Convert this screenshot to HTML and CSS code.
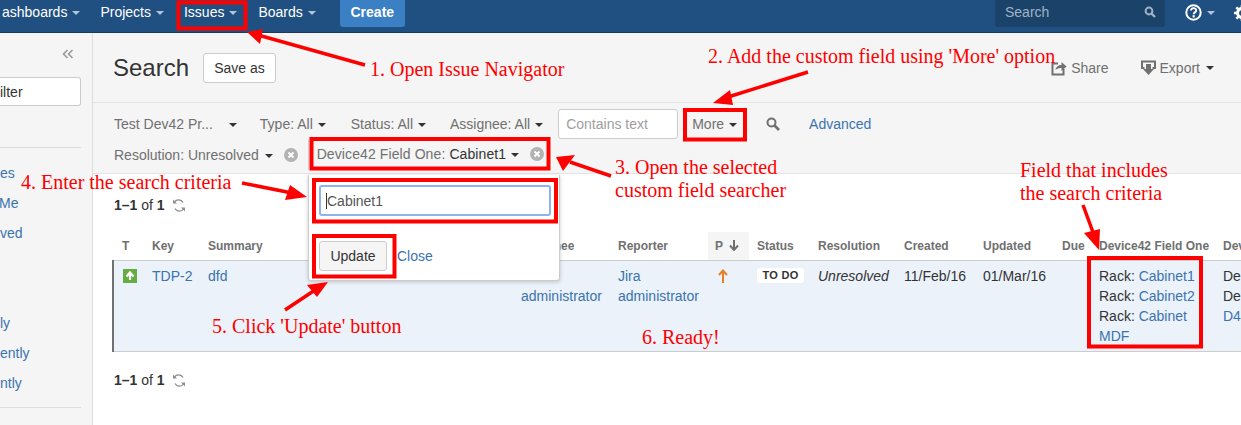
FILE: index.html
```html
<!DOCTYPE html>
<html lang="en">
<head>
    <meta charset="UTF-8">
    <title>Search</title>
    <link rel="stylesheet" href="styles.css">
</head>
<body>
    <header class="topbar">
        <nav class="nav">
            <a class="nav-item nav-first">ashboards<i class="caret caret-light"></i></a>
            <a class="nav-item">Projects<i class="caret caret-light"></i></a>
            <a class="nav-item nav-issues">Issues<i class="caret caret-light"></i></a>
            <a class="nav-item">Boards<i class="caret caret-light"></i></a>
            <a class="create">Create</a>
        </nav>
        <div class="top-right">
            <div class="quick-search">
                <span>Search</span>
                <svg width="12" height="12" viewBox="0 0 12 12"><circle cx="5" cy="5" r="3.4" fill="none" stroke="#9fb3c8" stroke-width="2"/><path d="M7.5 7.5L11 11" stroke="#9fb3c8" stroke-width="2.4"/></svg>
            </div>
            <div class="help">
                <svg width="17" height="17" viewBox="0 0 17 17"><circle cx="8.5" cy="8.5" r="7.2" fill="none" stroke="#fff" stroke-width="2"/><path d="M6 6.6c0-3.2 5.2-3.2 5.2-.2 0 1.900-2.500 2-2.500 3.900" fill="none" stroke="#fff" stroke-width="1.900"/><rect x="7.600" y="11.200" width="2.200" height="2.200" fill="#fff"/></svg>
                <i class="caret caret-light"></i>
            </div>
            <svg class="gear" width="16" height="16" viewBox="0 0 16 16"><circle cx="8" cy="8" r="4.500" fill="none" stroke="#fff" stroke-width="3"/><path d="M8 0v16M0 8h16M2.300 2.300l11.400 11.400M13.700 2.300L2.300 13.700" stroke="#fff" stroke-width="2.600" stroke-dasharray="3 10 3"/></svg>
        </div>
    </header>

    <div class="layout">
        <aside class="sidebar">
            <div class="side-top">
                <svg width="12" height="10" viewBox="0 0 12 10"><path d="M5.500 1L1.500 5l4 4M10.500 1l-4 4 4 4" fill="none" stroke="#999" stroke-width="1.600"/></svg>
            </div>
            <div class="side-filter">ilter</div>
            <ul class="side-list">
                <li>es</li>
                <li class="clip-m">Me</li>
                <li>ved</li>
                <li>&nbsp;</li>
                <li>&nbsp;</li>
                <li>ly</li>
                <li>ently</li>
                <li>ntly</li>
            </ul>
        </aside>

        <main class="content">
            <div class="page-head">
                <h1>Search</h1>
                <button class="save-as">Save as</button>
                <div class="head-actions">
                    <a class="head-link">
                        <svg width="16" height="16" viewBox="0 0 16 16"><path d="M7 3.500H1.500v11h11V9" fill="none" stroke="#707070" stroke-width="2"/><path d="M4.500 10c.5-3.500 3-5 6-5V2l5 4.500-5 4.500V8c-2.500 0-4.500.5-6 2z" fill="#707070"/></svg>
                        Share
                    </a>
                    <a class="head-link head-export">
                        <svg width="15" height="16" viewBox="0 0 15 16"><path d="M3.500 8H1V1.500h13V8h-2.500" fill="none" stroke="#707070" stroke-width="2"/><path d="M5 4h5v5h3l-5.500 6L2 9h3z" fill="#707070"/></svg>
                        Export<i class="caret"></i>
                    </a>
                </div>
            </div>

            <div class="filters">
                <div class="filter-row">
                    <span class="crit crit-project">Test Dev42 Pr...<i class="caret caret-far"></i></span>
                    <span class="crit crit-type">Type: All<i class="caret"></i></span>
                    <span class="crit">Status: All<i class="caret"></i></span>
                    <span class="crit crit-last">Assignee: All<i class="caret"></i></span>
                    <span class="text-query">Contains text</span>
                    <span class="crit crit-more">More<i class="caret"></i></span>
                    <svg class="search-go" width="14" height="14" viewBox="0 0 14 14"><circle cx="5.500" cy="5.500" r="4" fill="none" stroke="#707070" stroke-width="2"/><path d="M8.500 8.500L13 13" stroke="#707070" stroke-width="2.600"/></svg>
                    <a class="link">Advanced</a>
                </div>
                <div class="filter-row">
                    <span class="crit crit-res">Resolution: Unresolved<i class="caret"></i>
                        <svg class="clear" width="14" height="14" viewBox="0 0 14 14"><circle cx="7" cy="7" r="7" fill="#b3b3b3"/><path d="M4.500 4.500l5 5M9.500 4.500l-5 5" stroke="#fff" stroke-width="1.800"/></svg>
                    </span>
                    <span class="chip">Device42 Field One: <b>Cabinet1</b><i class="caret"></i>
                        <svg class="clear" width="14" height="14" viewBox="0 0 14 14"><circle cx="7" cy="7" r="7" fill="#b3b3b3"/><path d="M4.500 4.500l5 5M9.500 4.500l-5 5" stroke="#fff" stroke-width="1.800"/></svg>
                    </span>
                </div>
            </div>

            <div class="results">
                <div class="count">1–1 <span>of</span> 1
                    <svg width="14" height="13" viewBox="0 0 14 13"><path d="M11 3.500A5 5 0 0 0 2.500 3M3 9.500a5 5 0 0 0 8.500.5" fill="none" stroke="#8c8c8c" stroke-width="1.300"/><path d="M1 .5v4h4zM13 12.500v-4H9z" fill="#8c8c8c"/></svg>
                </div>
                <table class="issues">
                    <colgroup>
                        <col class="c31"><col class="c56"><col class="c313"><col class="c97"><col class="c98"><col class="c41"><col class="c61"><col class="c86"><col class="c79"><col class="c79"><col class="c37"><col class="c124"><col class="c30">
                    </colgroup>
                    <thead>
                        <tr>
                            <th class="first-head">T</th><th>Key</th><th>Summary</th><th>Assignee</th><th>Reporter</th>
                            <th class="sorted">P
                                <svg width="10" height="11" viewBox="0 0 10 11"><path d="M5 0v9M1 5.500L5 10l4-4.500" fill="none" stroke="#707070" stroke-width="2"/></svg>
                            </th>
                            <th>Status</th><th>Resolution</th><th>Created</th><th>Updated</th><th>Due</th><th>Device42 Field One</th><th>Dev</th>
                        </tr>
                    </thead>
                    <tbody>
                        <tr>
                            <td class="first"><svg class="type-icon" width="14" height="14" viewBox="0 0 14 14"><rect width="14" height="14" fill="#65ac43"/><path d="M7 11V5M3.500 7.500L7 3.500l3.500 4" fill="none" stroke="#fff" stroke-width="2.200"/></svg></td>
                            <td><a class="link">TDP-2</a></td>
                            <td><a class="link">dfd</a></td>
                            <td><a class="link">Jira</a> <a class="link">administrator</a></td>
                            <td><a class="link">Jira</a> <a class="link">administrator</a></td>
                            <td><svg class="prio" width="10" height="14" viewBox="0 0 10 14"><path d="M5 14V2M1 6l4-4.500L9 6" fill="none" stroke="#ea7d24" stroke-width="2"/></svg></td>
                            <td><span class="lozenge">TO DO</span></td>
                            <td><em>Unresolved</em></td>
                            <td>11/Feb/16</td>
                            <td>01/Mar/16</td>
                            <td></td>
                            <td>
                                <div>Rack: <a class="link">Cabinet1</a></div>
                                <div>Rack: <a class="link">Cabinet2</a></div>
                                <div>Rack: <a class="link">Cabinet</a></div>
                                <div><a class="link">MDF</a></div>
                            </td>
                            <td class="nowrap">
                                <div>De</div>
                                <div>De</div>
                                <div><a class="link">D4</a></div>
                            </td>
                        </tr>
                    </tbody>
                </table>
                <div class="count count-bottom">1–1 <span>of</span> 1
                    <svg width="14" height="13" viewBox="0 0 14 13"><path d="M11 3.500A5 5 0 0 0 2.500 3M3 9.500a5 5 0 0 0 8.500.5" fill="none" stroke="#8c8c8c" stroke-width="1.300"/><path d="M1 .5v4h4zM13 12.500v-4H9z" fill="#8c8c8c"/></svg>
                </div>
            </div>
        </main>
    </div>

    <!-- searcher dropdown, sits over the results -->
    <div class="popup">
        <div class="popup-input">Cabinet1</div>
        <div class="popup-actions">
            <button class="update">Update</button>
            <a class="link">Close</a>
        </div>
    </div>

    <!-- annotations drawn on the screenshot -->
    <svg class="marks" width="1241" height="425" viewBox="0 0 1241 425">
        <g fill="none" stroke="#f00" stroke-width="4">
            <rect x="178.500" y="2.500" width="67" height="26"/>
            <rect x="685" y="110" width="60" height="29.500"/>
            <rect x="311.500" y="139" width="237" height="29.500"/>
            <rect x="314" y="180" width="242" height="41.500"/>
            <rect x="314" y="236" width="80.500" height="40.500"/>
            <rect x="1089" y="258" width="112" height="88.500"/>
            <path d="M365 65L258 35M808 72L728 97M611 176L570 162M242 183L292 193M285 310L318 288M1083 205L1094 235" stroke-width="3.500"/>
        </g>
        <g fill="#f00">
            <polygon points="247,32 263,29 260,44"/>
            <polygon points="713,103 730,90 733,105"/>
            <polygon points="556,157 575,155 563,171"/>
            <polygon points="307,197 290,185 285,200"/>
            <polygon points="328,282 307,285 317,297"/>
            <polygon points="1099,250 1084,233 1100,229"/>
        </g>
    </svg>
    <div class="note note-1">1. Open Issue Navigator</div>
    <div class="note note-2">2. Add the custom field using 'More' option</div>
    <div class="note note-3">3. Open the selected<br>custom field searcher</div>
    <div class="note note-4">4. Enter the search criteria</div>
    <div class="note note-5">5. Click 'Update' button</div>
    <div class="note note-6">6. Ready!</div>
    <div class="note note-7">Field that includes<br>the search criteria</div>
</body>
</html>
```

FILE: styles.css
```css
* {
    margin: 0;
    padding: 0;
    box-sizing: border-box;
}

html, body {
    height: 425px;
    overflow: hidden;
}

body {
    position: relative;
    font-family: "Liberation Sans", Arial, sans-serif;
    font-size: 14px;
    line-height: 20px;
    color: #333;
    background-color: #fff;
}

.link {
    color: #3b73af;
}

/* top bar */
.topbar {
    display: flex;
    justify-content: space-between;
    height: 33px;
    background-color: #205081;
    border-bottom: 1px solid #1c3a59;
}

.nav {
    display: flex;
    align-items: flex-start;
    padding-left: 2px;
    color: #fff;
}

.nav-item {
    display: block;
    height: 27px;
    line-height: 25px;
    margin-right: 20px;
}

.nav-issues {
    margin-right: 21px;
}

.create {
    display: block;
    height: 27px;
    line-height: 25px;
    padding: 0 10px;
    margin-left: 4px;
    width: 65px;
    text-align: center;
    background-color: #3b7fc4;
    border-radius: 0 0 3px 3px;
    font-weight: bold;
}

.caret {
    display: inline-block;
    vertical-align: middle;
    margin-left: 5px;
    width: 0;
    height: 0;
    border-left: 4px solid transparent;
    border-right: 4px solid transparent;
    border-top: 4px solid #333;
}

.caret-light {
    border-top-color: #b3c4d6;
}

.caret-far {
    margin-left: 16px;
}

.top-right {
    display: flex;
    align-items: flex-start;
}

.quick-search {
    display: flex;
    align-items: center;
    justify-content: space-between;
    width: 170px;
    height: 27px;
    padding: 0 9px 3px 10px;
    color: #9fb3c8;
    background-color: #1b4268;
    border-radius: 0 0 3px 3px;
}

.help {
    display: flex;
    align-items: center;
    height: 25px;
    margin-left: 20px;
}

.gear {
    margin: 5px -9px 0 19px;
}

/* main layout */
.layout {
    display: flex;
    height: 392px;
}

.sidebar {
    flex: 0 0 93px;
    padding-right: 11px;
    background-color: #f5f5f5;
    border-right: 1px solid #ddd;
    color: #3b73af;
    overflow: hidden;
}

.side-top {
    display: flex;
    justify-content: flex-end;
    padding: 16px 7px 0 0;
    height: 44px;
}

.side-filter {
    height: 29px;
    line-height: 28px;
    color: #333;
    background-color: #fff;
    border: 1px solid #ccc;
    border-left: none;
    border-radius: 0 3px 3px 0;
}

.side-list {
    list-style: none;
    height: 261px;
    margin-top: 41px;
    padding-top: 15px;
    border-top: 1px solid #ddd;
    border-bottom: 1px solid #ddd;
}

.side-list li {
    height: 30px;
    line-height: 20px;
}

.side-list .clip-m {
    margin-left: -1px;
}

.content {
    flex: 1;
    min-width: 0;
}

.page-head {
    display: flex;
    align-items: center;
    height: 70px;
    padding: 0 27px 0 20px;
    background-color: #f5f5f5;
    border-bottom: 1px solid #e4e4e4;
}

.page-head h1 {
    font-size: 24px;
    font-weight: normal;
    line-height: 30px;
}

.save-as {
    width: 73px;
    height: 30px;
    margin-left: 14px;
    font: inherit;
    color: #333;
    background-color: #fff;
    border: 1px solid #ccc;
    border-radius: 3px;
}

.head-actions {
    display: flex;
    margin-left: auto;
    color: #707070;
}

.head-link {
    display: flex;
    align-items: center;
    gap: 4px;
}

.head-export {
    margin-left: 32px;
}

.head-export .caret {
    margin-left: 2px;
}

.filters {
    height: 71px;
    padding: 5px 21px 0;
    background-color: #f5f5f5;
    border-bottom: 1px solid #e4e4e4;
    color: #707070;
}

.filter-row {
    display: flex;
    align-items: center;
    height: 31px;
    white-space: nowrap;
}

.crit {
    margin-right: 24px;
}

.crit-project {
    margin-right: 23px;
}

.crit-type {
    margin-right: 25px;
}

.crit-last {
    margin-right: 15px;
}

.text-query {
    width: 120px;
    height: 30px;
    padding: 0 7px;
    line-height: 28px;
    color: #a0a0a0;
    background-color: #fff;
    border: 1px solid #ccc;
    border-radius: 3px;
}

.crit-more {
    margin: 0 29px 0 14px;
}

.search-go {
    margin-right: 29px;
}

.crit-res {
    margin-right: 10px;
}

.crit-res .caret {
    margin-left: 6px;
}

.clear {
    vertical-align: -2px;
    margin-left: 7px;
}

.chip {
    height: 31px;
    line-height: 31px;
    padding-left: 8px;
    letter-spacing: 0.1px;
    border-left: 1px solid #ccc;
}

.chip b {
    font-weight: normal;
    color: #333;
}

/* results */
.results {
    padding: 21px 0 0 21px;
}

.count {
    font-weight: bold;
    font-size: 14px;
    color: #333;
}

.count span {
    font-weight: normal;
}

.count svg {
    vertical-align: -2px;
    margin-left: 3px;
}

.count-bottom {
    margin-top: 18px;
}

.issues {
    table-layout: fixed;
    width: 1132px;
    margin: 17px 0 0 -2px;
    border-collapse: collapse;
}

.c30 { width: 30px; }
.c31 { width: 31px; }
.c37 { width: 37px; }
.c41 { width: 41px; }
.c56 { width: 56px; }
.c61 { width: 61px; }
.c79 { width: 79px; }
.c86 { width: 86px; }
.c97 { width: 97px; }
.c98 { width: 98px; }
.c124 { width: 124px; }
.c313 { width: 313px; }

.issues th {
    height: 28px;
    padding: 0 0 0 8px;
    font-size: 12px;
    text-align: left;
    color: #707070;
    white-space: nowrap;
    overflow: hidden;
}

.issues th.first-head {
    padding-left: 9px;
}

.issues th.sorted {
    padding-left: 7px;
    background-color: #f5f5f5;
}

.sorted svg {
    vertical-align: -1px;
    margin-left: 3px;
}

.issues tbody tr {
    background-color: #ebf2f9;
    border-top: 1px solid #ccc;
    border-bottom: 1px solid #ccc;
}

.issues td {
    padding: 5px 0 5px 8px;
    vertical-align: top;
}

.issues td.first {
    border-left: 2px solid #707070;
    padding-left: 9px;
}

.type-icon {
    display: block;
    margin-top: 3px;
}

.prio {
    display: block;
    margin: 3px 0 0 2px;
}

.lozenge {
    display: inline-block;
    width: 47px;
    height: 15px;
    margin-top: 2px;
    font-size: 11px;
    font-weight: bold;
    line-height: 15px;
    text-align: center;
    letter-spacing: 0.3px;
    background-color: #fff;
    border-radius: 3px;
    vertical-align: top;
}

.nowrap {
    white-space: nowrap;
}

/* dropdown */
.popup {
    position: absolute;
    left: 308px;
    top: 175px;
    width: 252px;
    height: 106px;
    padding: 10px 9px 0 10px;
    background-color: #fff;
    border: 1px solid #ccc;
    border-top: none;
    border-radius: 0 0 3px 3px;
    box-shadow: 0 1px 4px rgba(0, 0, 0, 0.2);
}

.popup-input {
    width: 232px;
    height: 31px;
    padding-left: 5px;
    line-height: 28px;
    color: #555;
    background-color: #fff;
    border: 2px solid #8fb3ee;
    border-radius: 3px;
}

/* text cursor in the focused field */
.popup-input::before {
    content: "";
    display: inline-block;
    width: 1px;
    height: 16px;
    vertical-align: -3px;
    background-color: #333;
}

.popup-actions {
    display: flex;
    align-items: center;
    gap: 10px;
    margin-top: 25px;
}

.update {
    width: 68px;
    height: 30px;
    font: inherit;
    color: #333;
    background-color: #f5f5f5;
    border: 1px solid #ccc;
    border-radius: 3px;
}

/* annotations */
.marks {
    position: absolute;
    left: 0;
    top: 0;
}

.note {
    position: absolute;
    font-family: "Liberation Serif", "Times New Roman", serif;
    font-size: 20px;
    line-height: 23px;
    color: #f00;
    white-space: nowrap;
}

.note-1 { left: 370px; top: 58px; }
.note-2 { left: 708px; top: 45px; }
.note-3 { left: 615px; top: 156px; }
.note-4 { left: 21px; top: 171px; }
.note-5 { left: 212px; top: 315px; }
.note-6 { left: 642px; top: 326px; }
.note-7 { left: 1020px; top: 159px; }
```
